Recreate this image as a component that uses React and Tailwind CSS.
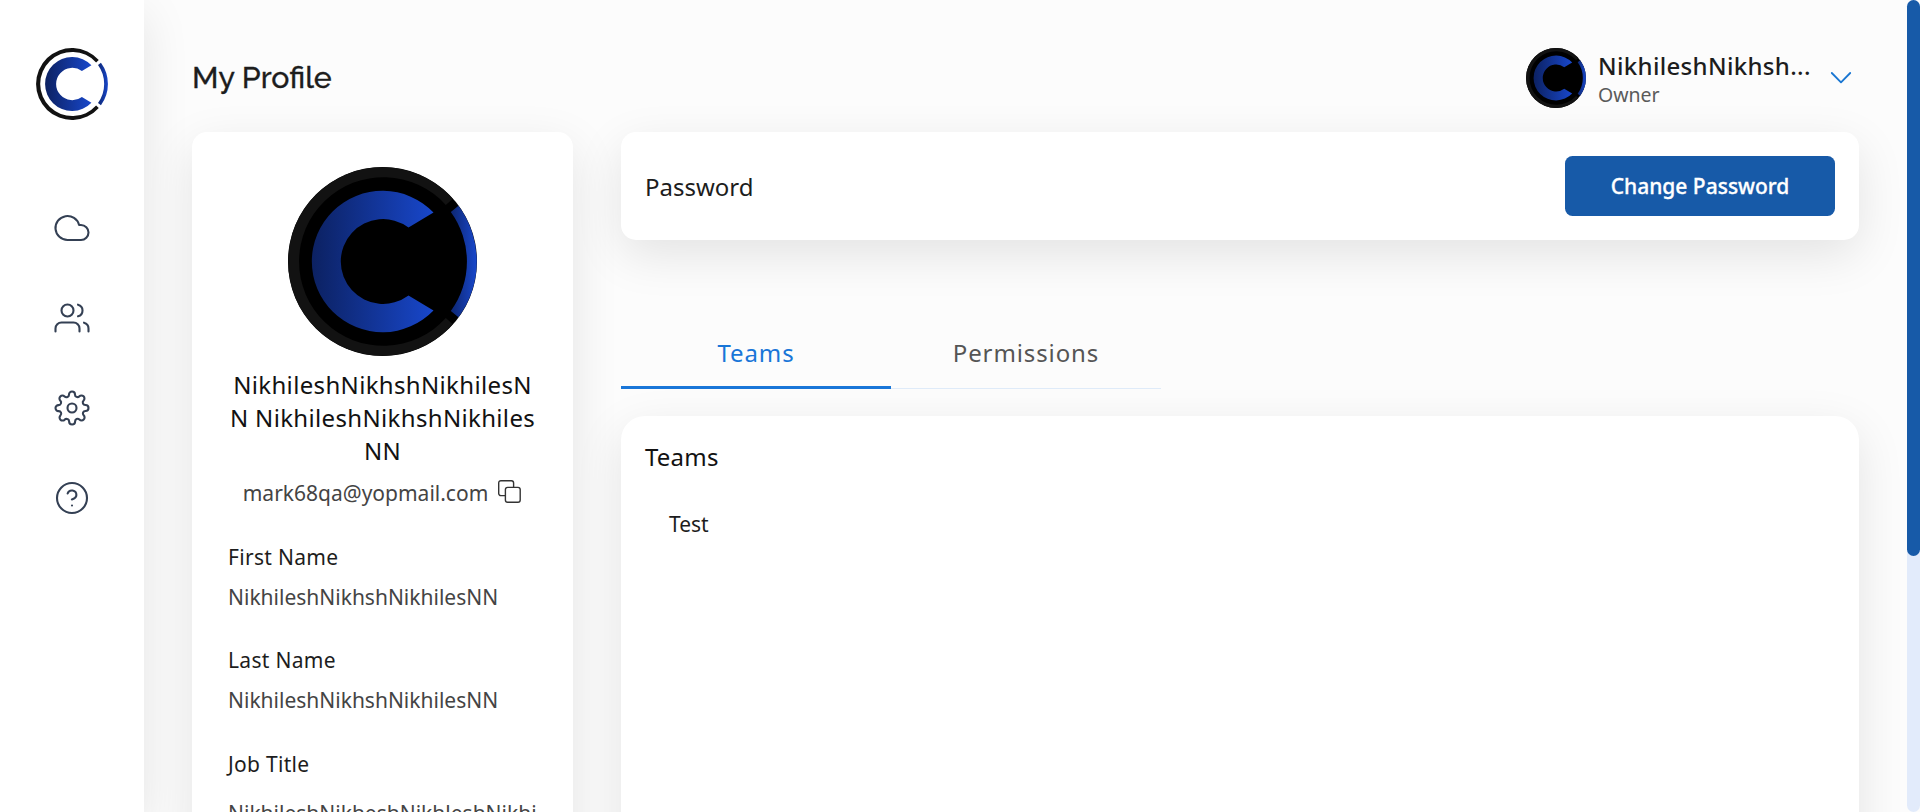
import React from "react";

const SHADOW = "shadow-[0_15px_48px_rgba(0,0,0,0.1)]";

function LogoShapes({ id, ring }) {
  return (
    <>
      <defs>
        <linearGradient id={id + "c"} gradientUnits="userSpaceOnUse" x1="-71" y1="0" x2="51" y2="0">
          <stop offset="0" stopColor="#0c2161" />
          <stop offset="1" stopColor="#1847cb" />
        </linearGradient>
        <linearGradient id={id + "a"} gradientUnits="userSpaceOnUse" x1="68" y1="0" x2="94" y2="0">
          <stop offset="0" stopColor="#0d2670" />
          <stop offset="1" stopColor="#1847cb" />
        </linearGradient>
      </defs>
      <path d="M70.3-62.8A94.3 94.3 0 1 0 70.3 62.8L63.3 56.6A84.3 84.3 0 1 1 63.3-56.6Z" fill={ring} />
      <path d="M76-55.8A94.3 94.3 0 0 1 76 55.8L68.3 49.6A84.3 84.3 0 0 0 68.3-49.6Z" fill={`url(#${id}a)`} />
      <path d="M51-49A70.7 70.7 0 1 0 51 49L26 34A42.4 42.4 0 1 1 26-34Z" fill={`url(#${id}c)`} />
    </>
  );
}

function Logo({ id, dark, className }) {
  return (
    <svg viewBox="-94.5 -94.5 189 189" className={className}>
      {dark && <circle r="94.5" fill="#000" />}
      <LogoShapes id={id} ring="#121212" />
    </svg>
  );
}

function NavIcon({ children }) {
  return (
    <svg
      viewBox="0 0 24 24"
      className="size-9"
      fill="none"
      stroke="#344054"
      strokeWidth="1.4"
      strokeLinecap="round"
      strokeLinejoin="round"
    >
      {children}
    </svg>
  );
}

function Sidebar() {
  return (
    <aside className={`relative z-10 flex w-36 shrink-0 flex-col items-center bg-white pt-12 ${SHADOW}`}>
      <Logo id="nav" className="size-[72px]" />
      <nav className="mt-[90px] flex flex-col gap-[54px]">
        <NavIcon>
          <path d="M18 10h-1.26A8 8 0 1 0 9 20h9a5 5 0 0 0 0-10z" />
        </NavIcon>
        <NavIcon>
          <path d="M17 21v-2a4 4 0 0 0-4-4H5a4 4 0 0 0-4 4v2" />
          <circle cx="9" cy="7" r="4" />
          <path d="M23 21v-2a4 4 0 0 0-3-3.87" />
          <path d="M16 3.13a4 4 0 0 1 0 7.75" />
        </NavIcon>
        <NavIcon>
          <circle cx="12" cy="12" r="3" />
          <path d="M19.4 15a1.65 1.65 0 0 0 .33 1.82l.06.06a2 2 0 0 1 0 2.83 2 2 0 0 1-2.83 0l-.06-.06a1.65 1.65 0 0 0-1.82-.33 1.65 1.65 0 0 0-1 1.51V21a2 2 0 0 1-2 2 2 2 0 0 1-2-2v-.09A1.65 1.65 0 0 0 9 19.4a1.65 1.65 0 0 0-1.82.33l-.06.06a2 2 0 0 1-2.83 0 2 2 0 0 1 0-2.83l.06-.06a1.65 1.65 0 0 0 .33-1.82 1.65 1.65 0 0 0-1.51-1H3a2 2 0 0 1-2-2 2 2 0 0 1 2-2h.09A1.65 1.65 0 0 0 4.6 9a1.65 1.65 0 0 0-.33-1.82l-.06-.06a2 2 0 0 1 0-2.83 2 2 0 0 1 2.83 0l.06.06a1.65 1.65 0 0 0 1.82.33H9a1.65 1.65 0 0 0 1-1.51V3a2 2 0 0 1 2-2 2 2 0 0 1 2 2v.09a1.65 1.65 0 0 0 1 1.51 1.65 1.65 0 0 0 1.82-.33l.06-.06a2 2 0 0 1 2.83 0 2 2 0 0 1 0 2.83l-.06.06a1.65 1.65 0 0 0-.33 1.82V9a1.65 1.65 0 0 0 1.51 1H21a2 2 0 0 1 2 2 2 2 0 0 1-2 2h-.09a1.65 1.65 0 0 0-1.51 1z" />
        </NavIcon>
        <NavIcon>
          <circle cx="12" cy="12" r="10" />
          <path d="M9.09 9a3 3 0 0 1 5.83 1c0 2-3 3-3 3" />
          <path d="M12 17h.01" />
        </NavIcon>
      </nav>
    </aside>
  );
}

function Header() {
  return (
    <header className="flex h-[60px] items-center justify-between">
      <h1 className="font-['Raleway','Lato',sans-serif] text-[30.3px] font-medium leading-9 text-[#1d1d1d] [-webkit-text-stroke:0.3px_#1d1d1d]">
        My Profile
      </h1>
      <div className="flex items-center pr-2">
        <Logo id="user" dark className="size-[60px]" />
        <div className="ml-3 w-[221px] pt-[2px]">
          <div className="text-[24px] font-medium leading-8 tracking-[0.33px] text-[#1d1d1d]">NikhileshNikhsh...</div>
          <div className="text-[19.5px] leading-[26px] text-[#5a5a5a]">Owner</div>
        </div>
        <svg viewBox="0 0 20 10" className="ml-3 h-[10px] w-5 overflow-visible" fill="none" stroke="#1976d2" strokeWidth="1.8" strokeLinecap="round" strokeLinejoin="round">
          <path d="M.8 0 10 9.4 19.2 0" />
        </svg>
      </div>
    </header>
  );
}

function Field({ label, value }) {
  return (
    <div>
      <div className="text-[21px] leading-7 tracking-[0.3px] text-[#1d1d1d]">{label}</div>
      <div className="mt-3 text-[21px] leading-7 text-[#444]">{value}</div>
    </div>
  );
}

function ProfileCard() {
  return (
    <section className={`h-[900px] w-[381px] shrink-0 rounded-[15px] bg-white px-9 pt-[35px] ${SHADOW}`}>
      <Logo id="profile" dark className="mx-auto size-[189px]" />
      <div className="mt-3 whitespace-nowrap text-center text-[24px] leading-[33px] tracking-[0.34px] text-[#121212]">
        NikhileshNikhshNikhilesN
        <br />N NikhileshNikhshNikhiles
        <br />
        NN
      </div>
      <div className="mt-3 flex items-center justify-center gap-[10px] pr-px text-[21px] leading-7 text-[#444]">
        mark68qa@yopmail.com
        <svg viewBox="0 0 23 23" className="mb-[3px] size-[23px]" fill="none" stroke="#333" strokeWidth="1.4" strokeLinejoin="round">
          <rect x="7.4" y="7.4" width="14.8" height="14.8" rx="2.2" />
          <path d="M7.4 15.6H2.9A2.2 2.2 0 0 1 .7 13.4V2.9A2.2 2.2 0 0 1 2.9.7h10.5a2.2 2.2 0 0 1 2.2 2.2v4.5" />
        </svg>
      </div>
      <div className="mt-9 flex flex-col gap-[35px]">
        <Field label="First Name" value="NikhileshNikhshNikhilesNN" />
        <Field label="Last Name" value="NikhileshNikhshNikhilesNN" />
        <div className="whitespace-nowrap pt-px">
          <div className="text-[21px] leading-7 tracking-[0.3px] text-[#1d1d1d]">Job Title</div>
          <div className="mt-[21px] text-[21px] leading-7 text-[#444]">NikhileshNikheshNikhleshNikhi</div>
        </div>
      </div>
    </section>
  );
}

function MainColumn() {
  return (
    <div className="flex flex-1 flex-col">
      <section className={`flex h-[108px] items-center justify-between rounded-[15px] bg-white px-6 ${SHADOW}`}>
        <span className="pt-[2px] text-[24px] text-[#1d1d1d]">Password</span>
        <button className="h-[60px] w-[270px] rounded-[7.5px] bg-[#175aa8] pt-[2px] text-[21px] font-medium text-white [-webkit-text-stroke:0.3px_#fff]">
          Change Password
        </button>
      </section>
      <div className="mt-[77px] flex h-[72px] w-[540px] text-[24px] tracking-[0.9px]">
        <div className="flex flex-1 items-center justify-center border-b-[3px] border-[#1976d8] pt-[2px] text-[#1976d8]">Teams</div>
        <div className="flex flex-1 items-center justify-center border-b border-[#dfebf9] text-[#555]">Permissions</div>
      </div>
      <section className={`mt-[27px] h-[600px] rounded-[24px] bg-white px-6 pt-[25px] ${SHADOW}`}>
        <h2 className="text-[24px] leading-8 tracking-[0.2px] text-[#121212]">Teams</h2>
        <div className="mt-[37px] px-6 text-[21px] leading-7 text-[#1d1d1d]">Test</div>
      </section>
    </div>
  );
}

export default function App() {
  return (
    <div className="flex h-[812px] w-[1920px] overflow-hidden bg-[#fcfcfc] font-['Noto_Sans',sans-serif]">
      <Sidebar />
      <main className="flex min-w-0 flex-1 flex-col pl-12 pr-12 pt-12">
        <Header />
        <div className="mt-6 flex gap-12">
          <ProfileCard />
          <MainColumn />
        </div>
      </main>
      <div className="z-10 w-[13px] shrink-0 rounded-full bg-[#e2ebfb]">
        <div className="h-[556px] rounded-full bg-[#175aa8]" />
      </div>
    </div>
  );
}
